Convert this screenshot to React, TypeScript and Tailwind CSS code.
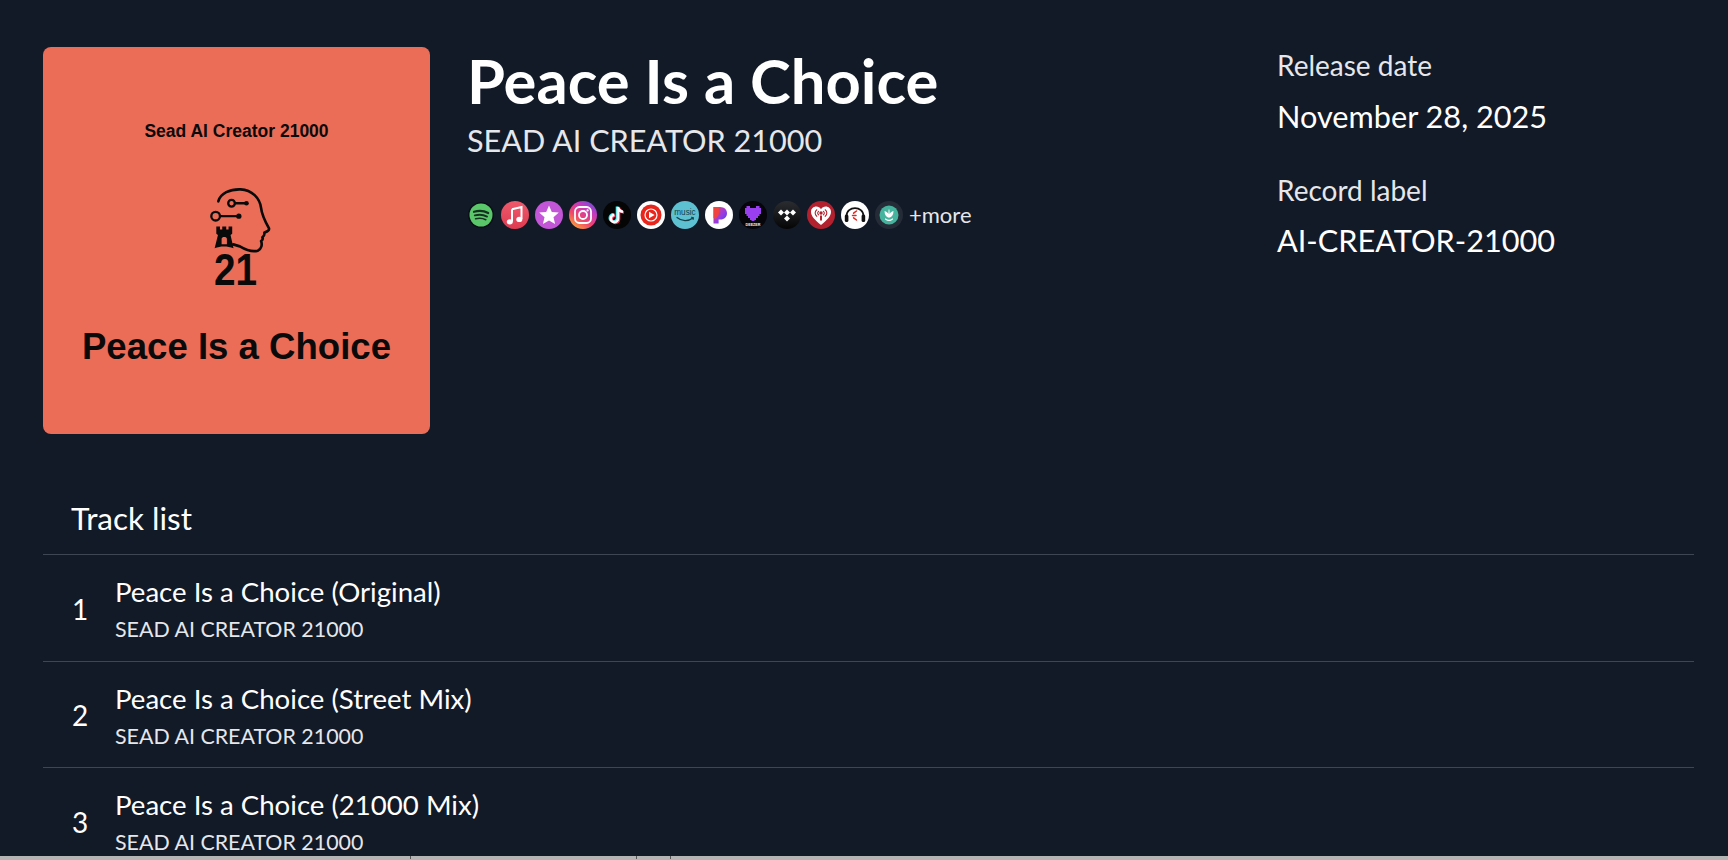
const tracks = ["Peace Is a Choice (Original)", "Peace Is a Choice (Street Mix)", "Peace Is a Choice (21000 Mix)"];

const lato = "font-['Lato',sans-serif]";

function CoverLogo() {
  // head + circuit + tower mark from the cover art
  return (
    <svg viewBox="115 50 190 200" className="w-[63px] h-[67px] ml-[7px] mt-[46px] shrink-0" aria-hidden>
      <path
        d="M143 92 C150 68 178 55 210 56 C245 58 268 82 272 112 C274 130 278 142 296 174 C297 180 290 184 282 186 C283 192 282 197 276 201 C278 205 277 209 272 212 C276 222 274 236 262 241 C245 246 225 238 208 228 L188 222"
        fill="none"
        stroke="#0a0a0a"
        strokeWidth="8"
        strokeLinecap="round"
        strokeLinejoin="round"
      />
      <g fill="none" stroke="#0a0a0a" strokeWidth="7">
        <circle cx="183" cy="98" r="10" />
        <circle cx="135" cy="137" r="13" />
        <path d="M193 98 H228 M148 137 H205" />
      </g>
      <circle cx="228" cy="98" r="7" fill="#0a0a0a" />
      <circle cx="205" cy="137" r="8" fill="#0a0a0a" />
      <path
        fillRule="evenodd"
        d="M137 168 H148 V177 H155 V168 H167 V177 H174 V168 H185 V190 L180 194 L189 234 C170 227 150 227 132 234 L142 194 L137 190 Z M153 222 H169 V206 C169 198 153 198 153 206 Z"
        fill="#0a0a0a"
      />
    </svg>
  );
}

function Spotify() {
  return (
    <svg viewBox="0 0 28 28" className="w-7 h-7" aria-hidden>
      <circle cx="14" cy="14" r="13" fill="#0b0f18" />
      <circle cx="14" cy="14" r="11.5" fill="#5bc76b" />
      <g fill="none" stroke="#14321f" strokeLinecap="round">
        <path d="M7 10.8 C11.5 9.4 17 9.7 21.2 12" strokeWidth="2.2" />
        <path d="M7.8 14.4 C11.8 13.3 16.5 13.6 20 15.6" strokeWidth="1.9" />
        <path d="M8.6 17.7 C12 16.9 15.8 17.1 18.8 18.7" strokeWidth="1.6" />
      </g>
    </svg>
  );
}

function AppleMusic() {
  return (
    <svg viewBox="0 0 28 28" className="w-7 h-7" aria-hidden>
      <defs>
        <linearGradient id="am" x1="0" y1="0" x2="0" y2="1">
          <stop offset="0%" stopColor="#ee5a6c" />
          <stop offset="100%" stopColor="#df3a50" />
        </linearGradient>
      </defs>
      <circle cx="14" cy="14" r="14" fill="url(#am)" />
      <path d="M11 8.2 L20.5 6 V18" fill="none" stroke="#fff" strokeWidth="2" />
      <path d="M11 8.2 V20.5" fill="none" stroke="#fff" strokeWidth="2" />
      <ellipse cx="8.8" cy="20.8" rx="3" ry="2.6" fill="#fff" />
      <ellipse cx="18.3" cy="18.4" rx="3" ry="2.6" fill="#fff" />
    </svg>
  );
}

function ItunesStar() {
  return (
    <svg viewBox="0 0 28 28" className="w-7 h-7" aria-hidden>
      <circle cx="14" cy="14" r="14" fill="#c256d6" />
      <path d="M14 4.5 L16.8 11 L23.8 11.6 L18.5 16.2 L20.1 23 L14 19.4 L7.9 23 L9.5 16.2 L4.2 11.6 L11.2 11 Z" fill="#fff" />
    </svg>
  );
}

function Instagram() {
  return (
    <svg viewBox="0 0 28 28" className="w-7 h-7" aria-hidden>
      <defs>
        <linearGradient id="ig" x1="0.1" y1="1" x2="0.8" y2="0">
          <stop offset="0%" stopColor="#fcb32c" />
          <stop offset="40%" stopColor="#f0456b" />
          <stop offset="75%" stopColor="#c13ac0" />
          <stop offset="100%" stopColor="#6a4fd8" />
        </linearGradient>
      </defs>
      <circle cx="14" cy="14" r="14" fill="url(#ig)" />
      <rect x="6" y="6" width="16" height="16" rx="4.5" fill="none" stroke="#fff" strokeWidth="1.8" />
      <circle cx="14" cy="14" r="4" fill="none" stroke="#fff" strokeWidth="1.8" />
      <circle cx="18.6" cy="9.4" r="1.1" fill="#fff" />
    </svg>
  );
}

function TikTok() {
  const note = "M15 6 V17.5 A3.6 3.6 0 1 1 11.4 13.9 M15 6 C15.4 8.8 17.2 10.4 20 10.7";
  return (
    <svg viewBox="0 0 28 28" className="w-7 h-7" aria-hidden>
      <circle cx="14" cy="14" r="14" fill="#050505" />
      <g fill="none" strokeWidth="2.6">
        <path d={note} stroke="#25e6e6" transform="translate(-1 -0.6)" />
        <path d={note} stroke="#fe2c55" transform="translate(1 0.8)" />
        <path d={note} stroke="#fff" />
      </g>
    </svg>
  );
}

function YouTubeMusic() {
  return (
    <svg viewBox="0 0 28 28" className="w-7 h-7" aria-hidden>
      <circle cx="14" cy="14" r="14" fill="#fff" />
      <circle cx="14" cy="14" r="10.5" fill="#e8261c" />
      <circle cx="14" cy="14" r="6" fill="none" stroke="#fff" strokeWidth="1.2" />
      <path d="M12 10.8 L17.6 14 L12 17.2 Z" fill="#fff" />
    </svg>
  );
}

function AmazonMusic() {
  return (
    <svg viewBox="0 0 28 28" className="w-7 h-7" aria-hidden>
      <circle cx="14" cy="14" r="14" fill="#5dc1d2" />
      <text x="14" y="13.5" textAnchor="middle" fontSize="8.2" fill="#14404a" fontFamily="'Liberation Sans', sans-serif">
        music
      </text>
      <path d="M6 16.5 C10.5 20.5 17.5 20.5 22 17" fill="none" stroke="#14404a" strokeWidth="1.2" strokeLinecap="round" />
      <path d="M20 16.2 L22.5 16.6 L22 19" fill="none" stroke="#14404a" strokeWidth="1" />
    </svg>
  );
}

function Pandora() {
  return (
    <svg viewBox="0 0 28 28" className="w-7 h-7" aria-hidden>
      <defs>
        <linearGradient id="pd" x1="0" y1="0" x2="1" y2="1">
          <stop offset="0%" stopColor="#e0406e" />
          <stop offset="55%" stopColor="#9a3be0" />
          <stop offset="100%" stopColor="#2f4bf0" />
        </linearGradient>
      </defs>
      <circle cx="14" cy="14" r="14" fill="#fff" />
      <path d="M8.5 6 H15 C19.5 6 22 8.8 22 12.3 C22 16 19.4 18.6 15.4 18.6 H13.6 V22.5 H8.5 Z" fill="url(#pd)" />
      <path d="M8.5 6 H13.5 C15.5 9.5 14.5 14 10.5 18 L8.5 17 Z" fill="#f0433f" />
    </svg>
  );
}

function Deezer() {
  return (
    <svg viewBox="0 0 28 28" className="w-7 h-7" aria-hidden>
      <circle cx="14" cy="14" r="14" fill="#05050a" />
      <path d="M7.5 5 H11 V7 H17 V5 H20.5 V7 H22 V13 H20.5 V15 H19 V17 H17 V19 H15.5 V20 H12.5 V19 H11 V17 H9 V15 H7.5 V13 H6 V7 H7.5 Z" fill="#9a3ff0" />
      <text x="14" y="24.5" textAnchor="middle" fontSize="3.7" fontWeight="700" fill="#f2f2f2" fontFamily="'Liberation Sans', sans-serif">
        DEEZER
      </text>
    </svg>
  );
}

function Tidal() {
  return (
    <svg viewBox="0 0 28 28" className="w-7 h-7" aria-hidden>
      <defs>
        <linearGradient id="td" x1="0" y1="0" x2="0" y2="1">
          <stop offset="0%" stopColor="#2a2c31" />
          <stop offset="100%" stopColor="#050505" />
        </linearGradient>
      </defs>
      <circle cx="14" cy="14" r="14" fill="url(#td)" />
      <g fill="#fff">
        <path d="M8 8.5 L11 11.5 L8 14.5 L5 11.5 Z" />
        <path d="M14 8.5 L17 11.5 L14 14.5 L11 11.5 Z" />
        <path d="M20 8.5 L23 11.5 L20 14.5 L17 11.5 Z" />
        <path d="M14 14.5 L17 17.5 L14 20.5 L11 17.5 Z" />
      </g>
    </svg>
  );
}

function IHeart() {
  return (
    <svg viewBox="0 0 28 28" className="w-7 h-7" aria-hidden>
      <circle cx="14" cy="14" r="14" fill="#b3212f" />
      <path d="M14 24 C8 19 4 15.5 4 10.8 C4 7.6 6.5 5.5 9.3 5.5 C11.2 5.5 13 6.5 14 8.3 C15 6.5 16.8 5.5 18.7 5.5 C21.5 5.5 24 7.6 24 10.8 C24 15.5 20 19 14 24 Z" fill="#fff" />
      <g fill="none" stroke="#b3212f" strokeWidth="1.1" strokeLinecap="round">
        <path d="M9.8 8.8 C7.6 10.5 7.6 13.5 9.8 15.3" />
        <path d="M18.2 8.8 C20.4 10.5 20.4 13.5 18.2 15.3" />
        <path d="M11.6 10.4 C10.4 11.4 10.4 12.8 11.6 13.8" />
        <path d="M16.4 10.4 C17.6 11.4 17.6 12.8 16.4 13.8" />
      </g>
      <circle cx="14" cy="12" r="1.7" fill="#b3212f" />
      <rect x="13" y="14.5" width="2" height="5" fill="#b3212f" />
    </svg>
  );
}

function Headphones() {
  return (
    <svg viewBox="0 0 28 28" className="w-7 h-7" aria-hidden>
      <circle cx="14" cy="14" r="14" fill="#fff" />
      <path d="M5.5 15 C5.5 4.5 22.5 4.5 22.5 15" fill="none" stroke="#111" strokeWidth="1.8" />
      <rect x="3.8" y="13.5" width="3.6" height="7.5" rx="1.6" fill="#111" />
      <rect x="20.6" y="13.5" width="3.6" height="7.5" rx="1.6" fill="#111" />
      <g stroke="#e0281e" strokeWidth="1.5" strokeLinecap="round">
        <path d="M15.5 10 L12.6 12.2" />
        <path d="M11.5 14.5 H15" />
        <path d="M12.6 16.8 L15.5 19" />
      </g>
    </svg>
  );
}

function JioSaavn() {
  return (
    <svg viewBox="0 0 28 28" className="w-7 h-7" aria-hidden>
      <circle cx="14" cy="14" r="14" fill="#252c38" />
      <circle cx="14" cy="14" r="9.5" fill="#45b39d" />
      <path d="M9.5 10 C11.5 10.5 12.8 11.5 13.4 13 L13.6 8.5 L14.4 8.5 L14.6 13 C15.2 11.5 16.5 10.5 18.5 10 C18.5 13.5 17 16 14 16.8 C11 16 9.5 13.5 9.5 10 Z" fill="#fff" />
      <path d="M10.5 18 C12.5 19.6 15.5 19.6 17.5 18" fill="none" stroke="#fff" strokeWidth="1.2" strokeLinecap="round" />
    </svg>
  );
}

export default function App() {
  return (
    <div className={`h-screen overflow-hidden flex flex-col bg-[#121927] text-white ${lato}`}>
      <main className="flex-1 min-h-0 overflow-hidden pl-[43px] pr-[34px] pt-[47px]">
        <div className="flex">
          <div className="w-[387px] h-[387px] shrink-0 rounded-lg bg-[#ec6d57] flex flex-col items-center text-[#0a0a0a] font-['Liberation_Sans',sans-serif] font-bold">
            <p className="mt-[74px] text-[17.5px] leading-[20px]">Sead AI Creator 21000</p>
            <CoverLogo />
            <p className="text-[44px] leading-[33px] -ml-[3px] -mt-px scale-x-[0.88]">21</p>
            <p className="mt-[41px] text-[36.6px] leading-[40px]">Peace Is a Choice</p>
          </div>

          <div className="ml-[37px] flex-1">
            <h1 className="text-[61.5px] leading-[66px] font-bold">Peace Is a Choice</h1>
            <p className="mt-[10px] text-[30.6px] leading-[36px] text-[#e5e7eb]">SEAD AI CREATOR 21000</p>
            <div className="mt-[42px] flex items-center gap-[6px]">
              <Spotify />
              <AppleMusic />
              <ItunesStar />
              <Instagram />
              <TikTok />
              <YouTubeMusic />
              <AmazonMusic />
              <Pandora />
              <Deezer />
              <Tidal />
              <IHeart />
              <Headphones />
              <JioSaavn />
              <span className="text-[22px] leading-[28px] text-[#e5e7eb]">+more</span>
            </div>
          </div>

          <div className="w-[417px] shrink-0">
            <p className="text-[28px] leading-[36px] text-[#e5e7eb]">Release date</p>
            <p className="mt-[16px] text-[30.7px] leading-[36px]">November 28, 2025</p>
            <p className="mt-[37px] text-[28px] leading-[36px] text-[#e5e7eb]">Record label</p>
            <p className="mt-[15px] text-[30.7px] leading-[36px]">AI-CREATOR-21000</p>
          </div>
        </div>

        <div className="mt-[66px]">
          <h2 className="px-[28px] text-[31.5px] leading-[36px] pb-[18px] border-b border-[#3f4653]">Track list</h2>
          {tracks.map((t, i) => (
            <div key={t} className="flex items-center h-[106.5px] border-b border-[#3f4653]">
              <span className="w-[72px] pl-[29px] pt-[2px] text-[28px]">{i + 1}</span>
              <div className="pt-[2px]">
                <p className="text-[27.6px] leading-[36px]">{t}</p>
                <p className="mt-[5px] text-[21.4px] leading-[28px] text-[#e5e7eb]">SEAD AI CREATOR 21000</p>
              </div>
            </div>
          ))}
        </div>
      </main>
      <div className="relative h-[4px] shrink-0 bg-[#b4b4b4]">
        <span className="absolute left-[410px] top-0 h-[3px] w-px bg-[#555]" />
        <span className="absolute left-[636px] top-0 h-[3px] w-px bg-[#555]" />
        <span className="absolute left-[670px] top-0 h-[3px] w-px bg-[#555]" />
      </div>
    </div>
  );
}
